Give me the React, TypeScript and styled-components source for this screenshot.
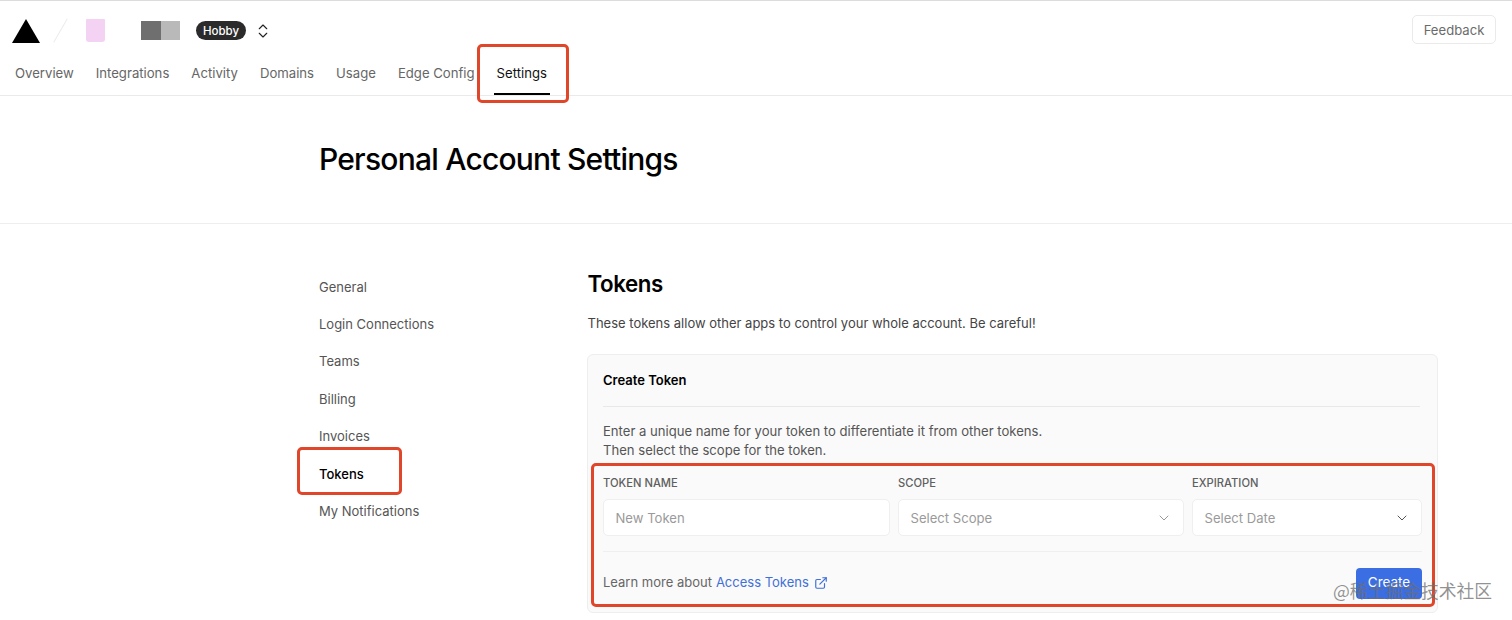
import React from 'react'
import styled, { createGlobalStyle } from 'styled-components'
import { ChevronDown, ChevronsUpDown, ExternalLink } from 'lucide-react'

const GlobalStyle = createGlobalStyle`
  html, body {
    margin: 0;
    height: 620px;
    overflow: hidden;
    background: #fff;
    font-family: Inter, "Noto Sans", sans-serif;
    -webkit-font-smoothing: antialiased;
  }
  * { box-sizing: border-box; }
`

const Page = styled.div`
  position: relative;
  width: 1512px;
  height: 620px;
  overflow: hidden;
`

const Header = styled.header`
  height: 96px;
  border-top: 1px solid #dcdcdc;
  border-bottom: 1px solid #eaeaea;
`

const TopRow = styled.div`
  display: flex;
  align-items: center;
  height: 59px;
  padding: 0 16px 0 12px;
`

const Logo = styled.div`
  width: 28px;
  height: 24px;
  margin-top: 1px;
  background: #000;
  clip-path: polygon(50% 0, 100% 100%, 0 100%);
`

const Slash = styled.div`
  width: 1px;
  height: 27px;
  margin: 0 17px 0 20px;
  background: #ececec;
  transform: rotate(30deg);
`

const Avatar = styled.div`
  width: 19px;
  height: 23px;
  margin-left: 8px;
  background: #f3d2f4;
  border-radius: 1px 1px 3px 3px;
`

const Team = styled.div`
  display: flex;
  width: 39px;
  height: 19px;
  margin-left: 36px;
`

const TeamBlock = styled.div<{ $color: string }>`
  flex: 1;
  background: ${({ $color }) => $color};
`

const Badge = styled.span`
  display: flex;
  align-items: center;
  justify-content: center;
  width: 50px;
  height: 19px;
  margin-left: 16px;
  border-radius: 10px;
  background: #2b2b2b;
  color: #fff;
  font-size: 11.5px;
  font-weight: 500;
`

const Switcher = styled.span`
  display: flex;
  margin-left: 8px;
  color: #222;
`

const Feedback = styled.button`
  width: 84px;
  height: 29px;
  margin-left: auto;
  margin-top: -2px;
  padding: 0;
  border: 1px solid #eaeaea;
  border-radius: 5px;
  background: #fff;
  color: #6b6b6b;
  font: 400 13.1px Inter, sans-serif;
`

const Tabs = styled.nav`
  display: flex;
  gap: 22px;
  height: 35px;
  padding-left: 15px;
`

const Tab = styled.a<{ $active?: boolean }>`
  position: relative;
  padding-top: 5px;
  color: ${({ $active }) => ($active ? '#111' : '#666')};
  font-size: 13.15px;
  line-height: 17px;

  ${({ $active }) =>
    $active &&
    `
    &::after {
      content: '';
      position: absolute;
      left: -3px;
      right: -3px;
      bottom: 0;
      height: 2px;
      background: #000;
    }
  `}
`

const TitleBand = styled.div`
  display: flex;
  align-items: center;
  height: 128px;
  padding-left: 319px;
  padding-bottom: 2px;
  border-bottom: 1px solid #eeeeee;
`

const Title = styled.h1`
  margin: 0;
  color: #000;
  font-size: 30px;
  font-weight: 500;
  letter-spacing: -0.78px;
`

const Content = styled.div`
  display: grid;
  grid-template-columns: 268px 851px;
  padding: 45px 0 0 319px;
`

const SideNav = styled.nav`
  display: flex;
  flex-direction: column;
  margin-top: -1px;
`

const SideLink = styled.a<{ $active?: boolean }>`
  display: flex;
  align-items: center;
  height: 37.4px;
  color: ${({ $active }) => ($active ? '#000' : '#555')};
  font-size: 13px;
  font-weight: ${({ $active }) => ($active ? 500 : 400)};
`

const Main = styled.main`
  display: flex;
  flex-direction: column;
`

const Heading = styled.h2`
  margin: 0;
  height: 32px;
  padding-left: 0.5px;
  color: #000;
  font-size: 22.3px;
  font-weight: 600;
  line-height: 30px;
  letter-spacing: -0.4px;
`

const Intro = styled.p`
  margin: 12px 0 0;
  padding-left: 0.5px;
  color: #444;
  font-size: 13px;
  line-height: 20px;
`

const Card = styled.section`
  height: 259px;
  margin-top: 21px;
  padding: 0 15px;
  border: 1px solid #eeeeee;
  border-radius: 6px;
  background: #fafafa;
`

const CardTitle = styled.div`
  display: flex;
  align-items: center;
  height: 52px;
  padding-bottom: 1px;
  border-bottom: 1px solid #e8e8e8;
  margin-right: 2px;
  color: #000;
  font-size: 13px;
  font-weight: 600;
`

const CardText = styled.p`
  margin: 15px 0 0;
  color: #555;
  font-size: 13.1px;
  line-height: 19px;
`

const Fields = styled.div`
  display: grid;
  grid-template-columns: 287px 286px 1fr;
  gap: 8px;
  margin-top: 14px;
`

const Field = styled.div`
  display: flex;
  flex-direction: column;
`

const Label = styled.label`
  height: 18px;
  margin-bottom: 7px;
  color: #5f5f5f;
  font-size: 11.2px;
  font-weight: 500;
  line-height: 18px;
`

const Control = styled.div`
  display: flex;
  align-items: center;
  justify-content: space-between;
  height: 37px;
  padding: 0 11px 0 11.5px;
  border: 1px solid #efefef;
  border-radius: 5px;
  background: #fff;
  color: #9a9a9a;
  font-size: 13.1px;
`

const Arrow = styled(ChevronDown)<{ $muted?: boolean }>`
  color: ${({ $muted }) => ($muted ? '#999' : '#555')};
`

const Footer = styled.div`
  display: flex;
  align-items: flex-start;
  justify-content: space-between;
  height: 62px;
  margin-top: 15px;
  padding-top: 16px;
  border-top: 1px solid #efefef;
`

const Learn = styled.span`
  display: flex;
  align-items: center;
  gap: 4px;
  margin-top: 6px;
  color: #666;
  font-size: 13px;
  line-height: 17px;
`

const DocLink = styled.a`
  display: inline-flex;
  align-items: center;
  gap: 5px;
  color: #3f6fd8;
`

const CreateButton = styled.button`
  width: 66px;
  height: 31px;
  padding: 0 0 3px;
  border: 0;
  border-radius: 4px;
  background: #3b6de3;
  color: #fff;
  font: 400 13.5px Inter, sans-serif;
`

/* red annotations drawn over the screenshot */
const Callout = styled.div<{ $x: number; $y: number; $w: number; $h: number }>`
  position: absolute;
  left: ${({ $x }) => $x}px;
  top: ${({ $y }) => $y}px;
  width: ${({ $w }) => $w}px;
  height: ${({ $h }) => $h}px;
  border: 3px solid #e0462a;
  border-radius: 5px;
`

const Watermark = styled.div`
  position: absolute;
  left: 1333px;
  top: 578px;
  color: rgba(110, 110, 110, 0.75);
  font-family: "Noto Sans CJK SC", sans-serif;
  font-size: 17.8px;
  line-height: 24px;
  white-space: nowrap;
`

const tabs = ['Overview', 'Integrations', 'Activity', 'Domains', 'Usage', 'Edge Config', 'Settings']
const links = ['General', 'Login Connections', 'Teams', 'Billing', 'Invoices', 'Tokens', 'My Notifications']

const App = () => (
  <Page>
    <GlobalStyle />
    <Header>
      <TopRow>
        <Logo />
        <Slash />
        <Avatar />
        <Team>
          <TeamBlock $color="#6f6f6f" />
          <TeamBlock $color="#b9b9b9" />
        </Team>
        <Badge>Hobby</Badge>
        <Switcher>
          <ChevronsUpDown size={18} strokeWidth={1.5} />
        </Switcher>
        <Feedback>Feedback</Feedback>
      </TopRow>
      <Tabs>
        {tabs.map((tab) => (
          <Tab key={tab} $active={tab === 'Settings'}>
            {tab}
          </Tab>
        ))}
      </Tabs>
    </Header>
    <TitleBand>
      <Title>Personal Account Settings</Title>
    </TitleBand>
    <Content>
      <SideNav>
        {links.map((link) => (
          <SideLink key={link} $active={link === 'Tokens'}>
            {link}
          </SideLink>
        ))}
      </SideNav>
      <Main>
        <Heading>Tokens</Heading>
        <Intro>These tokens allow other apps to control your whole account. Be careful!</Intro>
        <Card>
          <CardTitle>Create Token</CardTitle>
          <CardText>
            Enter a unique name for your token to differentiate it from other tokens.
            <br />
            Then select the scope for the token.
          </CardText>
          <Fields>
            <Field>
              <Label>TOKEN NAME</Label>
              <Control>New Token</Control>
            </Field>
            <Field>
              <Label>SCOPE</Label>
              <Control>
                Select Scope
                <Arrow size={16} strokeWidth={1.5} $muted />
              </Control>
            </Field>
            <Field>
              <Label>EXPIRATION</Label>
              <Control>
                Select Date
                <Arrow size={16} strokeWidth={1.5} />
              </Control>
            </Field>
          </Fields>
          <Footer>
            <Learn>
              Learn more about
              <DocLink>
                Access Tokens
                <ExternalLink size={14} strokeWidth={2} />
              </DocLink>
            </Learn>
            <CreateButton>Create</CreateButton>
          </Footer>
        </Card>
      </Main>
    </Content>
    <Callout $x={477} $y={44} $w={92} $h={59} />
    <Callout $x={297} $y={447} $w={105} $h={48} />
    <Callout $x={591} $y={463} $w={844} $h={144} />
    <Watermark>@稀土掘金技术社区</Watermark>
  </Page>
)

export default App
